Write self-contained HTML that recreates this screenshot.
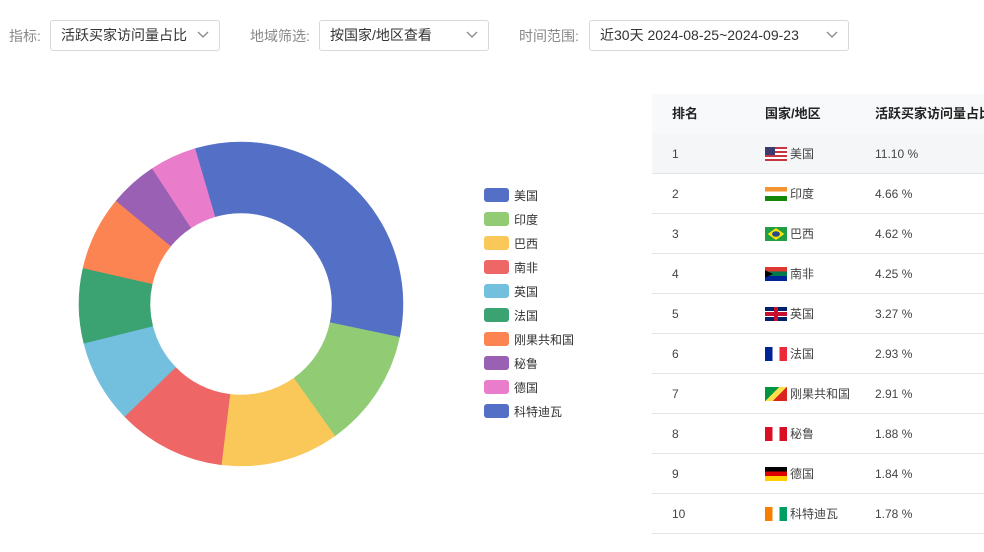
<!DOCTYPE html>
<html><head><meta charset="utf-8"><style>
body{margin:0;width:984px;height:552px;background:#fff;font-family:"Liberation Sans","Noto Sans CJK SC",sans-serif;position:relative;overflow:hidden;color:#333}
.lbl{position:absolute;top:26px;font-size:14px;color:#888}
.sel{position:absolute;top:20px;height:29px;border:1px solid #d9d9d9;border-radius:3px;font-size:14px;color:#333;line-height:29px;padding-left:10px;box-sizing:content-box}
.sel svg{position:absolute;right:10px;top:10px}
.tbl{position:absolute;left:652px;top:94px;width:332px}
.hd{height:40px;background:#f8f9fb;font-size:13px;font-weight:bold;color:#222;position:relative}
.row{height:39px;border-bottom:1px solid #e4e4e4;position:relative;font-size:12px;color:#444}
.c1{position:absolute;left:20px;top:0;line-height:40px}
.c2{position:absolute;left:113px;top:0;line-height:40px;display:flex;align-items:center;height:40px}
.c3{position:absolute;left:223px;top:0;line-height:40px;white-space:nowrap}
.flag{width:22px;height:14px;margin-right:3px;display:inline-block}
.lg{position:absolute;left:484px;font-size:12px;color:#333}
.lg i{display:inline-block;width:25px;height:14px;border-radius:3px;vertical-align:-2px;margin-right:5px}
</style></head><body>
<div class="lbl" style="left:9px">指标:</div>
<div class="sel" style="left:50px;width:158px">活跃买家访问量占比<svg width="12" height="8"><path d="M1 1l5 5 5-5" fill="none" stroke="#888" stroke-width="1.3"/></svg></div>
<div class="lbl" style="left:250px">地域筛选:</div>
<div class="sel" style="left:319px;width:158px">按国家/地区查看<svg width="12" height="8"><path d="M1 1l5 5 5-5" fill="none" stroke="#888" stroke-width="1.3"/></svg></div>
<div class="lbl" style="left:519px">时间范围:</div>
<div class="sel" style="left:589px;width:248px">近30天 2024-08-25~2024-09-23<svg width="12" height="8"><path d="M1 1l5 5 5-5" fill="none" stroke="#888" stroke-width="1.3"/></svg></div>

<svg id="pie" width="984" height="552" style="position:absolute;left:0;top:0"></svg>
<script>
var v=[11.10,4.66,4.62,4.25,3.27,2.93,2.91,1.88,1.84,1.78],c=["#5470c6","#91cc75","#fac858","#ee6666","#73c0de","#3ba272","#fc8452","#9a60b4","#ea7ccc","#5470c6"];
var s=v.reduce((a,b)=>a+b),a=0,cx=241,cy=304,R=162,r=91,h="";
function p(rad,ang){return [cx+rad*Math.sin(ang),cy-rad*Math.cos(ang)]}
v.forEach((x,i)=>{var b=a+x/s*2*Math.PI,l=(b-a)>Math.PI?1:0;var A=p(R,a),B=p(R,b),C=p(r,b),D=p(r,a);
h+='<path d="M'+A+'A'+R+' '+R+' 0 '+l+' 1 '+B+'L'+C+'A'+r+' '+r+' 0 '+l+' 0 '+D+'Z" fill="'+c[i]+'" stroke="'+c[i]+'" stroke-width="0.5"/>';a=b;});
document.getElementById('pie').innerHTML=h;
</script>

<div class="lg" style="top:187px"><i style="background:#5470c6"></i>美国</div>
<div class="lg" style="top:211px"><i style="background:#91cc75"></i>印度</div>
<div class="lg" style="top:235px"><i style="background:#fac858"></i>巴西</div>
<div class="lg" style="top:259px"><i style="background:#ee6666"></i>南非</div>
<div class="lg" style="top:283px"><i style="background:#73c0de"></i>英国</div>
<div class="lg" style="top:307px"><i style="background:#3ba272"></i>法国</div>
<div class="lg" style="top:331px"><i style="background:#fc8452"></i>刚果共和国</div>
<div class="lg" style="top:355px"><i style="background:#9a60b4"></i>秘鲁</div>
<div class="lg" style="top:379px"><i style="background:#ea7ccc"></i>德国</div>
<div class="lg" style="top:403px"><i style="background:#5470c6"></i>科特迪瓦</div>

<div class="tbl">
<div class="hd"><span class="c1">排名</span><span class="c2">国家/地区</span><span class="c3">活跃买家访问量占比</span></div>
<div class="row" style="background:#f5f6f8"><span class="c1">1</span><span class="c2"><span class="flag" style="background:repeating-linear-gradient(#c8343f 0 2px,#fff 2px 4px);position:relative"><span style="position:absolute;left:0;top:0;width:10px;height:8px;background:#3c3b6e"></span></span>美国</span><span class="c3">11.10 %</span></div>
<div class="row"><span class="c1">2</span><span class="c2"><span class="flag" style="background:linear-gradient(#f39432 33%,#fff 33% 66%,#138808 66%)"></span>印度</span><span class="c3">4.66 %</span></div>
<div class="row"><span class="c1">3</span><span class="c2"><span class="flag" style="background:#229e45;display:inline-flex;align-items:center;justify-content:center"><span style="width:12px;height:12px;background:#f8e509;transform:scaleX(1.4) rotate(45deg) scale(.7);display:flex;align-items:center;justify-content:center"><span style="width:8px;height:8px;border-radius:50%;background:#2b4990"></span></span></span>巴西</span><span class="c3">4.62 %</span></div>
<div class="row"><span class="c1">4</span><span class="c2"><span class="flag" style="background:linear-gradient(#de3831 33%,#007a4d 33% 66%,#002395 66%);position:relative;overflow:hidden"><span style="position:absolute;left:-7px;top:0;width:0;height:0;border-top:7px solid transparent;border-bottom:7px solid transparent;border-left:15px solid #000"></span></span>南非</span><span class="c3">4.25 %</span></div>
<div class="row"><span class="c1">5</span><span class="c2"><span class="flag" style="background:#012169;position:relative"><span style="position:absolute;left:0;top:4px;width:22px;height:4px;background:#c8102e;border-top:1px solid #fff;border-bottom:1px solid #fff;box-sizing:content-box"></span><span style="position:absolute;left:9px;top:0;width:4px;height:14px;background:#c8102e"></span></span>英国</span><span class="c3">3.27 %</span></div>
<div class="row"><span class="c1">6</span><span class="c2"><span class="flag" style="background:linear-gradient(90deg,#002395 33%,#fff 33% 66%,#ed2939 66%)"></span>法国</span><span class="c3">2.93 %</span></div>
<div class="row"><span class="c1">7</span><span class="c2"><span class="flag" style="background:linear-gradient(135deg,#009543 40%,#fbde4a 40% 60%,#dc241f 60%)"></span>刚果共和国</span><span class="c3">2.91 %</span></div>
<div class="row"><span class="c1">8</span><span class="c2"><span class="flag" style="background:linear-gradient(90deg,#d91023 33%,#fff 33% 66%,#d91023 66%)"></span>秘鲁</span><span class="c3">1.88 %</span></div>
<div class="row"><span class="c1">9</span><span class="c2"><span class="flag" style="background:linear-gradient(#000 33%,#dd0000 33% 66%,#ffce00 66%)"></span>德国</span><span class="c3">1.84 %</span></div>
<div class="row"><span class="c1">10</span><span class="c2"><span class="flag" style="background:linear-gradient(90deg,#f77f00 33%,#fff 33% 66%,#009e60 66%)"></span>科特迪瓦</span><span class="c3">1.78 %</span></div>
</div>
</body></html>
